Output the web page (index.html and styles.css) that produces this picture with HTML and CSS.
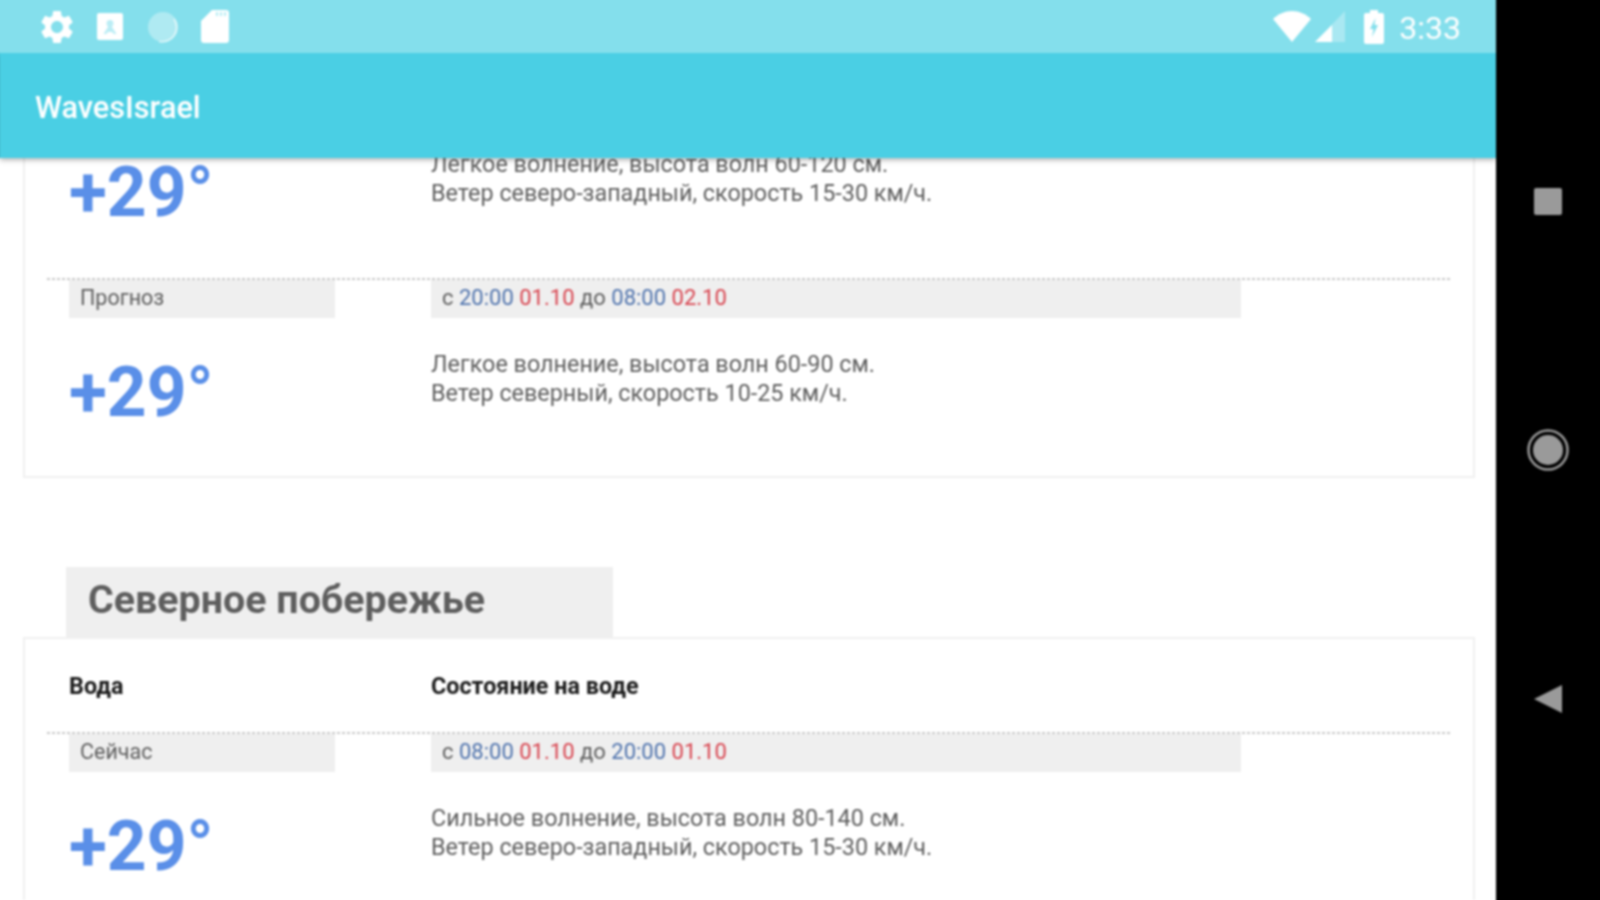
FILE: index.html
```html
<!DOCTYPE html>
<html lang="ru">
<head>
<meta charset="utf-8">
<title>WavesIsrael</title>
<link rel="stylesheet" href="styles.css">
</head>
<body>
<div class="screen">
  <div class="device">
    <header class="statusbar">
      <div class="status-left">
        <svg class="ic-gear" viewBox="0 0 24 24"><path d="M19.14 12.94c.04-.3.06-.61.06-.94s-.02-.64-.07-.94l2.03-1.58c.18-.14.23-.41.12-.61l-1.92-3.32c-.12-.22-.37-.29-.59-.22l-2.39.96c-.5-.38-1.03-.7-1.62-.94l-.36-2.54c-.04-.24-.24-.41-.48-.41h-3.84c-.24 0-.43.17-.47.41l-.36 2.54c-.59.24-1.13.57-1.62.94l-2.39-.96c-.22-.08-.47 0-.59.22L2.74 8.87c-.12.21-.08.47.12.61l2.03 1.58c-.05.3-.09.63-.09.94s.02.64.07.94l-2.03 1.58c-.18.14-.23.41-.12.61l1.92 3.32c.12.22.37.29.59.22l2.39-.96c.5.38 1.03.7 1.62.94l.36 2.54c.05.24.24.41.48.41h3.84c.24 0 .44-.17.47-.41l.36-2.54c.59-.24 1.13-.56 1.62-.94l2.39.96c.22.08.47 0 .59-.22l1.92-3.32c.12-.22.07-.47-.12-.61l-2.01-1.58zM12 15.6c-1.98 0-3.6-1.62-3.6-3.6s1.62-3.6 3.6-3.6 3.6 1.62 3.6 3.6-1.62 3.6-3.6 3.6z"/></svg>
        <svg class="ic-contact" viewBox="0 0 26 27"><path d="M2 0h22a2 2 0 0 1 2 2v23a2 2 0 0 1-2 2H2a2 2 0 0 1-2-2V2a2 2 0 0 1 2-2z"/><path class="contact-person" d="M13 7a3.400 3.400 0 0 0-3.400 3.600c0 1.300.6 2.500 1.500 3.200L6.500 21h3l1.200-2h4.600l1.200 2h3l-4.600-7.200c.9-.7 1.500-1.900 1.500-3.200A3.400 3.400 0 0 0 13 7z"/></svg>
        <svg class="ic-circle" viewBox="0 0 32 32"><circle class="circle-fill" cx="16" cy="16" r="15"/><path class="circle-rim" d="M27 8a14.500 14.500 0 0 1-15 22.500"/></svg>
        <svg class="ic-sd" viewBox="0 0 28 33"><path d="M11 0h14a3 3 0 0 1 3 3v27a3 3 0 0 1-3 3H3a3 3 0 0 1-3-3V11z"/><path class="sd-pins" d="M15 2h2v4h-2zM19 2h2v4h-2zM23 2h2v4h-2z"/></svg>
      </div>
      <div class="status-right">
        <svg class="ic-wifi" viewBox="0 0 38 31"><path d="M19 31L0 8C5 3 12 0 19 0s14 3 19 8z"/></svg>
        <svg class="ic-signal" viewBox="0 0 30 31"><path class="signal-bg" d="M30 0v31H0z"/><path d="M17 14v17H0z"/></svg>
        <svg class="ic-battery" viewBox="0 0 20 34"><path fill-rule="evenodd" d="M6 0h8v3h4a2 2 0 0 1 2 2v27a2 2 0 0 1-2 2H2a2 2 0 0 1-2-2V5a2 2 0 0 1 2-2h4zM11.500 8L6 19h3.500L8 27l6-12h-3.500z"/></svg>
        <span class="clock">3:33</span>
      </div>
    </header>
    <div class="appbar">WavesIsrael</div>
    <main class="content">
      <section class="card card-scrolled">
        <div class="row-body row-body-first">
          <div class="temp">+29°</div>
          <p class="desc">Легкое волнение, высота волн 60-120 см.<br>Ветер северо-западный, скорость 15-30 км/ч.</p>
        </div>
        <div class="row-head">
          <div class="label">Прогноз</div>
          <div class="period">с <b class="time">20:00</b> <b class="date">01.10</b> до <b class="time">08:00</b> <b class="date">02.10</b></div>
        </div>
        <div class="row-body">
          <div class="temp">+29°</div>
          <p class="desc">Легкое волнение, высота волн 60-90 см.<br>Ветер северный, скорость 10-25 км/ч.</p>
        </div>
      </section>

      <h2 class="region">Северное побережье</h2>
      <section class="card">
        <div class="columns">
          <div>Вода</div>
          <div>Состояние на воде</div>
        </div>
        <div class="row-head">
          <div class="label">Сейчас</div>
          <div class="period">с <b class="time">08:00</b> <b class="date">01.10</b> до <b class="time">20:00</b> <b class="date">01.10</b></div>
        </div>
        <div class="row-body">
          <div class="temp">+29°</div>
          <p class="desc">Сильное волнение, высота волн 80-140 см.<br>Ветер северо-западный, скорость 15-30 км/ч.</p>
        </div>
      </section>
    </main>
  </div>
  <nav class="navbar">
    <span class="nav-square"></span>
    <svg class="nav-home" viewBox="0 0 42 42"><circle class="home-ring" cx="21" cy="21" r="19.500"/><circle class="home-dot" cx="21" cy="21" r="15"/></svg>
    <svg class="nav-back" viewBox="0 0 28 28"><path d="M28 0v28L0 14z"/></svg>
  </nav>
</div>
</body>
</html>
```

FILE: styles.css
```css
* { box-sizing: border-box; }
html, body { margin: 0; padding: 0; background: #000; overflow: hidden; height: 100%; }
body { font-family: Roboto, "Liberation Sans", sans-serif; }

/* The frame bleeds 4px past the window so the soft focus has no dark fringe at the edges. */
.screen {
  display: flex; width: 1608px; height: 908px; margin: -4px; padding: 4px; overflow: hidden;
  filter: blur(0.8px);
  background:
    linear-gradient(#84dfec, #84dfec) 0 0 / 1500px 57px no-repeat,
    linear-gradient(#4acfe4, #4acfe4) 0 57px / 4px 105px no-repeat,
    linear-gradient(#000, #000) 1500px 0 / 108px 100% no-repeat,
    #fff;
}
.device { width: 1496px; height: 900px; display: flex; flex-direction: column; background: #fff; }

.statusbar {
  height: 53px; flex: none; background: #84dfec; display: flex; align-items: center;
  justify-content: space-between; padding: 0 35px 0 41px; position: relative; z-index: 3;
}
.status-left, .status-right { display: flex; align-items: center; }
.statusbar svg { fill: #fff; display: block; flex: none; }
.ic-gear { width: 40px; height: 40px; margin: 0 0 0 -4px; }
.ic-contact { width: 26px; height: 27px; margin-left: 20px; }
.statusbar .contact-person { fill: #84dfec; opacity: .55; }
.ic-circle { width: 32px; height: 32px; margin-left: 24px; }
.circle-fill { fill: #fff; opacity: .35; }
.circle-rim { fill: none; stroke: #fff; stroke-width: 1.500; opacity: .7; }
.ic-sd { width: 28px; height: 33px; margin-left: 22px; }
.statusbar .sd-pins { fill: #84dfec; opacity: .6; }
.ic-wifi { width: 38px; height: 31px; }
.ic-signal { width: 30px; height: 31px; margin-left: 4px; }
.signal-bg { opacity: .3; }
.ic-battery { width: 20px; height: 34px; margin-left: 19px; }
.clock { color: #fff; font-size: 32px; margin-left: 15px; padding-top: 3px; line-height: 50px; }

.appbar {
  height: 105px; flex: none; background: #4acfe4; color: #fff; font-size: 30.700px; font-weight: 500;
  line-height: 109px; padding-left: 35px; position: relative; z-index: 2;
  box-shadow: 0 2px 5px rgba(0,0,0,.3);
}

.content { flex: 1; min-height: 0; overflow: hidden; padding: 0 21px 0 23px; }
.card { border: 2px solid #f0f0f0; padding: 0 22px; }
.card-scrolled { border-top: 0; margin-top: -8px; }

.row-head {
  display: grid; grid-template-columns: 266px 810px; column-gap: 96px;
  padding: 2px 0 0 22px; color: #5e5e5e;
  background: repeating-linear-gradient(90deg, #c8c8c8 0 3px, transparent 3px 5px) top left / 100% 2px no-repeat;
}
.label, .period { height: 38px; background: #efefef; line-height: 36px; padding-left: 11px; }
.label { font-size: 21.500px; }
.period { font-size: 22px; }
.period b { font-weight: 400; }
.time { color: #4f73ad; }
.date { color: #d8434e; }

.row-body { display: grid; grid-template-columns: 362px 1fr; padding: 32px 0 68px 22px; height: 158px; }
.row-body-first { padding-top: 0; height: 128px; }
.temp { color: #5a8fe8; font-size: 69.500px; font-weight: 700; line-height: 58px; margin-top: 14px; }
.desc { margin: 0; font-size: 23.350px; line-height: 29px; color: #5e5e5e; }

.region {
  margin: 89px 0 0 43px; width: 547px; height: 70px; background: #efefef; color: #5e5e5e;
  font-size: 39.400px; font-weight: 700; line-height: 66px; padding-left: 22px;
}

.columns {
  display: grid; grid-template-columns: 362px 1fr; padding: 32px 0 0 22px; height: 93px;
  font-size: 23.350px; font-weight: 700; color: #1c1c1c; line-height: 30px;
}

.navbar {
  width: 104px; height: 900px; background: #000; display: flex; flex-direction: column;
  align-items: center; padding: 188px 0 0 0; gap: 214px;
}
.nav-square { width: 28px; height: 27px; background: #9a9a9a; border-radius: 2px; flex: none; }
.nav-home { width: 42px; height: 42px; flex: none; }
.home-ring { fill: none; stroke: #9a9a9a; stroke-width: 2.500; }
.home-dot { fill: #9a9a9a; }
.nav-back { width: 28px; height: 28px; fill: #9a9a9a; flex: none; }
```
